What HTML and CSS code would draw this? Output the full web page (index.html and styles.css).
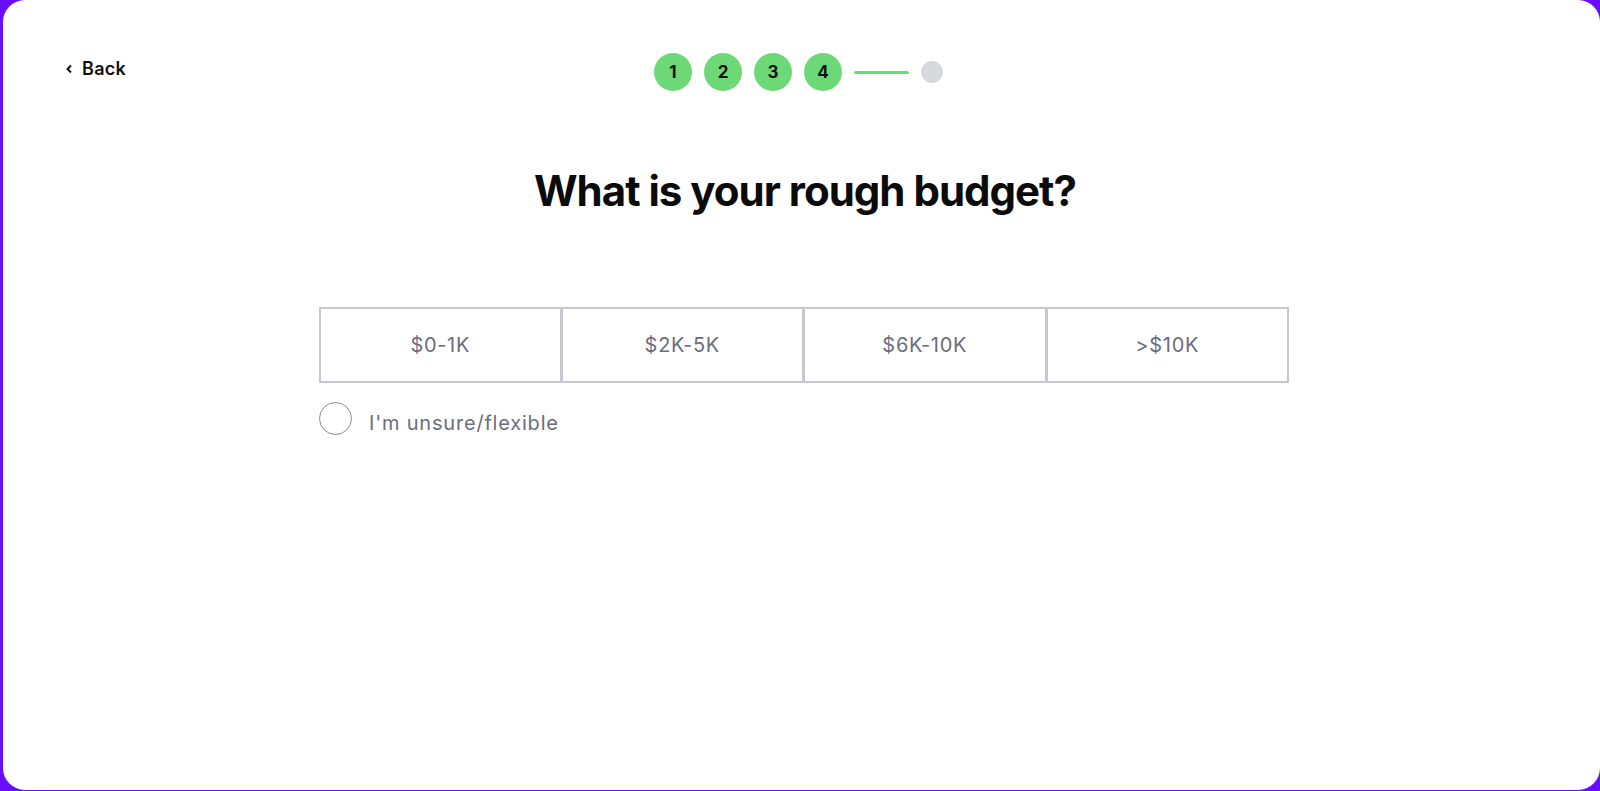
FILE: index.html
```html
<!DOCTYPE html>
<html lang="en">
<head>
  <meta charset="UTF-8">
  <title>Budget</title>
  <link rel="stylesheet" href="styles.css">
</head>
<body>
  <div class="card">
    <div class="top-bar">
      <a class="back" href="#">
        <svg width="8" height="10" viewBox="0 0 8 10"><path d="M6 1.5 2.5 5 6 8.5" fill="none" stroke="#111" stroke-width="2"/></svg>
        Back
      </a>

      <div class="steps">
        <span class="step done">1</span>
        <span class="step done">2</span>
        <span class="step done">3</span>
        <span class="step done">4</span>
        <span class="step-line"></span>
        <span class="step-dot"></span>
      </div>
      <div></div>
    </div>

    <h1>What is your rough budget?</h1>

    <div class="question">
      <div class="options">
        <button class="option">$0-1K</button>
        <button class="option">$2K-5K</button>
        <button class="option">$6K-10K</button>
        <button class="option">&gt;$10K</button>
      </div>

      <label class="unsure">
        <span class="radio"></span>
        <span class="unsure-text">I'm unsure/flexible</span>
      </label>
    </div>
  </div>
</body>
</html>
```

FILE: styles.css
```css
* {
  box-sizing: border-box;
}

body {
  margin: 0;
  background-color: #6a0dfc;
  font-family: Inter, "Noto Sans", sans-serif;
}

.card {
  margin-left: 3px;
  height: 790px;
  background-color: #ffffff;
  border-radius: 22px;
  padding-top: 53px;
}

.top-bar {
  display: grid;
  grid-template-columns: 1fr auto 1fr;
  align-items: start;
}

.back {
  display: flex;
  align-items: center;
  gap: 9px;
  margin-left: 62px;
  margin-top: 5px;
  color: #111;
  font-size: 18px;
  font-weight: 600;
  letter-spacing: 0.3px;
  text-decoration: none;
}

.steps {
  display: flex;
  align-items: center;
  gap: 12px;
  margin-right: 6px;
}

.step {
  width: 38px;
  height: 38px;
  border-radius: 50%;
  display: flex;
  align-items: center;
  justify-content: center;
  font-size: 17px;
  font-weight: 700;
  color: #111;
}

.step.done {
  background-color: #6cd976;
}

.step-line {
  width: 55px;
  height: 3px;
  border-radius: 2px;
  background-color: #6cd976;
}

.step-dot {
  width: 22px;
  height: 22px;
  border-radius: 50%;
  background-color: #d8d9de;
}

h1 {
  margin: 75px 0 0;
  padding-left: 7px;
  text-align: center;
  font-size: 42px;
  line-height: 50px;
  font-weight: 700;
  letter-spacing: -1px;
  color: #0b0b0b;
}

.question {
  width: 970px;
  margin: 91px 0 0 316px;
}

.options {
  display: grid;
  grid-template-columns: repeat(4, 1fr);
}

.option {
  height: 76px;
  background: #fff;
  border: 2px solid #c6c7d1;
  margin-left: -1px;
  font-family: Inter, "Noto Sans", sans-serif;
  font-size: 20px;
  letter-spacing: 0.7px;
  color: #6b6d80;
  cursor: pointer;
}

.option:first-child {
  margin-left: 0;
}

.unsure {
  display: flex;
  align-items: center;
  gap: 17px;
  margin-top: 18px;
  font-size: 20px;
  letter-spacing: 0.8px;
  color: #6b6d80;
}

.unsure-text {
  margin-top: 10px;
}

.radio {
  width: 33px;
  height: 33px;
  border-radius: 50%;
  border: 1px solid #8a8b95;
}
```
